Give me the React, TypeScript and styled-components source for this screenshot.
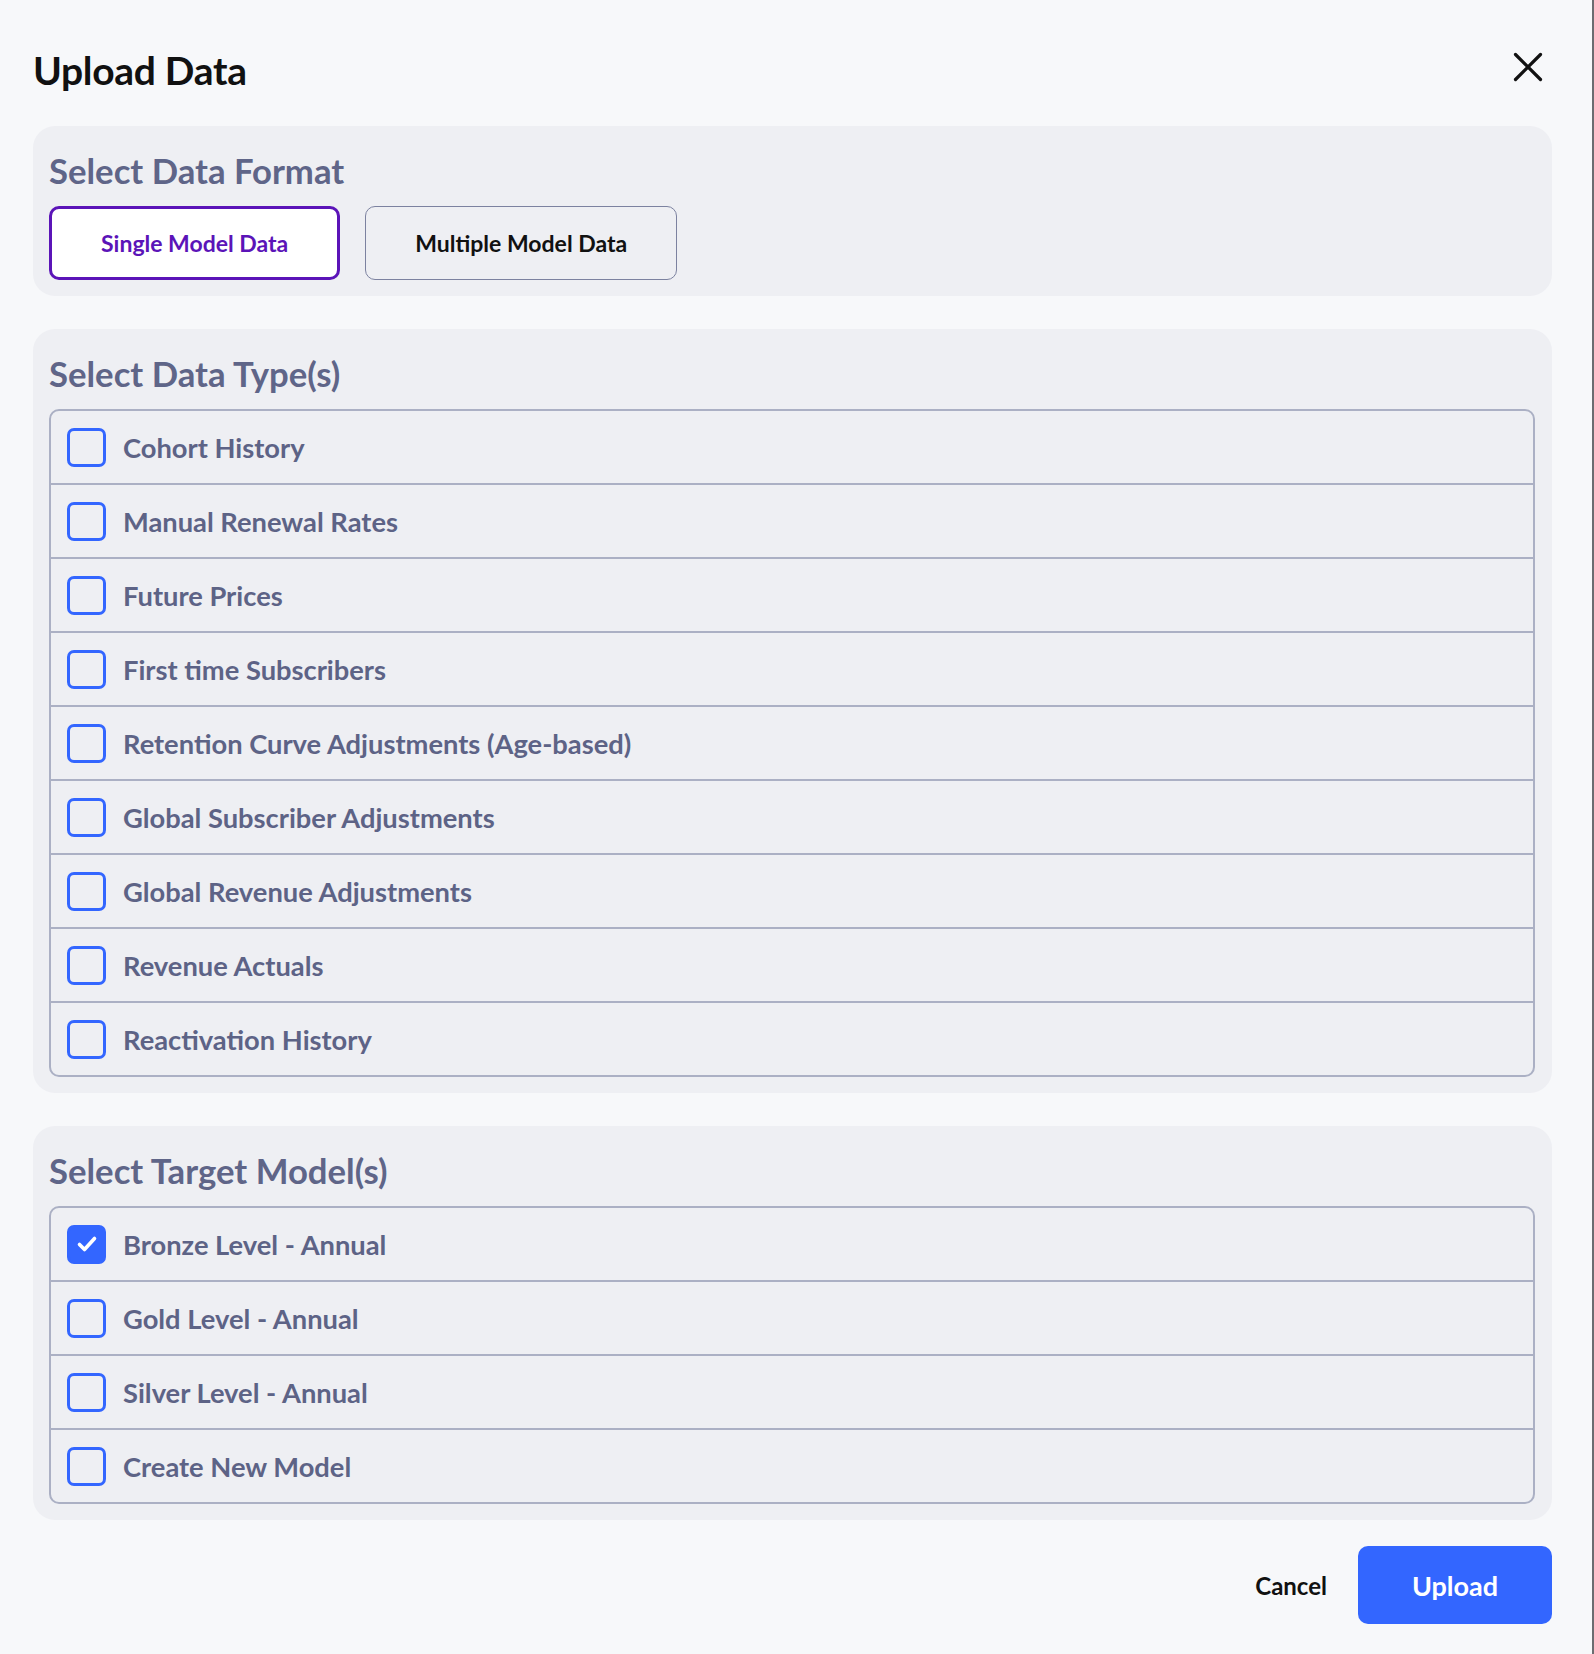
import * as React from 'react';
import { useState } from 'react';
import styled, { createGlobalStyle } from 'styled-components';

const dataTypes = [
    'Cohort History',
    'Manual Renewal Rates',
    'Future Prices',
    'First time Subscribers',
    'Retention Curve Adjustments (Age-based)',
    'Global Subscriber Adjustments',
    'Global Revenue Adjustments',
    'Revenue Actuals',
    'Reactivation History',
];

const models = [
    'Bronze Level - Annual',
    'Gold Level - Annual',
    'Silver Level - Annual',
    'Create New Model',
];

const App: React.FC = () => {
    const [format, setFormat] = useState<'single' | 'multiple'>('single');
    const [types, setTypes] = useState<string[]>([]);
    const [targets, setTargets] = useState<string[]>(['Bronze Level - Annual']);

    const toggle = (list: string[], set: (v: string[]) => void, item: string) => {
        set(list.includes(item) ? list.filter((i) => i !== item) : [...list, item]);
    };

    return (
        <>
            <GlobalStyle />
            <Modal>
                <Header>
                    <Title>Upload Data</Title>
                    <CloseButton aria-label="Close">
                        <svg width="30" height="30" viewBox="0 0 30 30">
                            <path d="M2.5 2.5 L27.5 27.5 M27.5 2.5 L2.5 27.5" stroke="#111" strokeWidth="3.2" strokeLinecap="round" fill="none" />
                        </svg>
                    </CloseButton>
                </Header>

                <Panel>
                    <PanelHeading>Select Data Format</PanelHeading>
                    <FormatRow>
                        <FormatButton $active={format === 'single'} onClick={() => setFormat('single')}>
                            Single Model Data
                        </FormatButton>
                        <FormatButton $active={format === 'multiple'} onClick={() => setFormat('multiple')}>
                            Multiple Model Data
                        </FormatButton>
                    </FormatRow>
                </Panel>

                <Panel>
                    <PanelHeading>Select Data Type(s)</PanelHeading>
                    <OptionList>
                        {dataTypes.map((t) => (
                            <OptionRow key={t} onClick={() => toggle(types, setTypes, t)}>
                                <CheckBox $checked={types.includes(t)}>
                                    {types.includes(t) && <CheckMark />}
                                </CheckBox>
                                <OptionLabel>{t}</OptionLabel>
                            </OptionRow>
                        ))}
                    </OptionList>
                </Panel>

                <Panel>
                    <PanelHeading>Select Target Model(s)</PanelHeading>
                    <OptionList>
                        {models.map((m) => (
                            <OptionRow key={m} onClick={() => toggle(targets, setTargets, m)}>
                                <CheckBox $checked={targets.includes(m)}>
                                    {targets.includes(m) && <CheckMark />}
                                </CheckBox>
                                <OptionLabel>{m}</OptionLabel>
                            </OptionRow>
                        ))}
                    </OptionList>
                </Panel>

                <Footer>
                    <CancelButton>Cancel</CancelButton>
                    <UploadButton>Upload</UploadButton>
                </Footer>
            </Modal>
        </>
    );
};

const CheckMark = () => (
    <svg width="22" height="22" viewBox="0 0 22 22">
        <path d="M3.5 11.5 L8.5 16.5 L18.5 5.5" stroke="#fff" strokeWidth="3.6" strokeLinecap="round" strokeLinejoin="round" fill="none" />
    </svg>
);

const GlobalStyle = createGlobalStyle`
    body {
        margin: 0;
        background: #6c6c70;
        font-family: Lato, "Liberation Sans", sans-serif;
    }
`;

const Modal = styled.div`
    width: 1592px;
    min-height: 1654px;
    box-sizing: border-box;
    background-color: #f7f8fa;
    padding: 30px 40px 31px 33px;
    display: flex;
    flex-direction: column;
`;

const Header = styled.header`
    height: 80px;
    display: flex;
    align-items: center;
    justify-content: space-between;
    margin-bottom: 16px;
`;

const Title = styled.h1`
    margin: 0;
    font-size: 39px;
    font-weight: 700;
    color: #111;
    letter-spacing: -0.3px;
`;

const CloseButton = styled.button`
    border: 0;
    background: none;
    padding: 0;
    margin: 0 9px 6px 0;
    width: 30px;
    height: 30px;
    cursor: pointer;
    display: flex;
`;

const Panel = styled.section`
    background-color: #eeeff3;
    border-radius: 22px;
    padding: 25px 17px 16px 16px;
    margin-bottom: 33px;

    &:last-of-type {
        margin-bottom: 26px;
    }
`;

const PanelHeading = styled.h2`
    margin: 0 0 15px;
    font-size: 34.7px;
    line-height: 40px;
    font-weight: 700;
    color: #5f6588;
`;

const FormatRow = styled.div`
    display: flex;
    gap: 25px;
`;

const FormatButton = styled.button<{ $active: boolean }>`
    height: 74px;
    padding: 0 49px;
    border-radius: 10px;
    font-family: inherit;
    font-size: 23px;
    font-weight: 700;
    cursor: pointer;
    background-color: ${(p) => (p.$active ? '#ffffff' : 'transparent')};
    color: ${(p) => (p.$active ? '#5b14b8' : '#111')};
    border: ${(p) => (p.$active ? '3px solid #5b14b8' : '1.5px solid #7c82a0')};
`;

const OptionList = styled.div`
    border: 2px solid #abb0c4;
    border-radius: 10px;
    display: flex;
    flex-direction: column;
`;

const OptionRow = styled.label`
    height: 72px;
    display: flex;
    align-items: center;
    gap: 17px;
    padding-left: 16px;
    cursor: pointer;

    & + & {
        border-top: 2px solid #abb0c4;
    }
`;

const CheckBox = styled.span<{ $checked: boolean }>`
    width: 39px;
    height: 39px;
    box-sizing: border-box;
    border-radius: 7px;
    border: 3px solid #3366ff;
    background-color: ${(p) => (p.$checked ? '#3366ff' : 'transparent')};
    display: flex;
    align-items: center;
    justify-content: center;
    flex-shrink: 0;
`;

const OptionLabel = styled.span`
    font-size: 27.3px;
    font-weight: 700;
    color: #5d6386;
`;

const Footer = styled.footer`
    display: flex;
    justify-content: flex-end;
    align-items: center;
    gap: 31px;
`;

const CancelButton = styled.button`
    border: 0;
    background: none;
    padding: 0;
    font-family: inherit;
    font-size: 24px;
    font-weight: 700;
    color: #111;
    cursor: pointer;
`;

const UploadButton = styled.button`
    width: 194px;
    height: 78px;
    border: 0;
    border-radius: 10px;
    background-color: #3366ff;
    color: #fff;
    font-family: inherit;
    font-size: 27px;
    font-weight: 700;
    cursor: pointer;
`;

export default App;
